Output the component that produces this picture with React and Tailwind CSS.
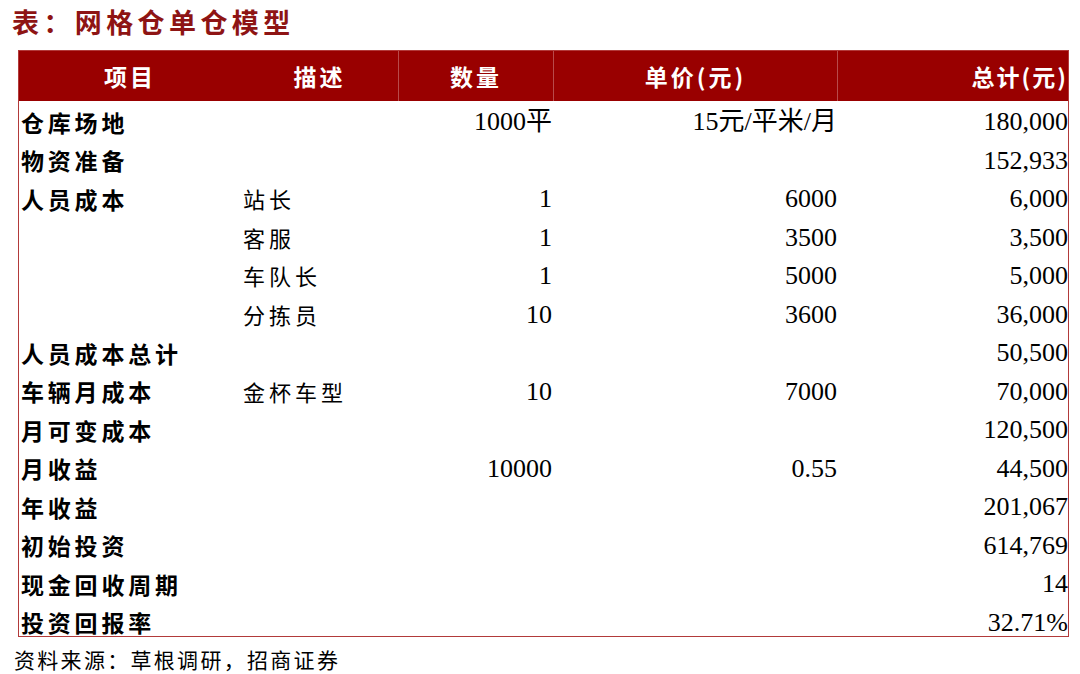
const rows = [
  ["仓库场地", "", "1000平", "15元/平米/月", "180,000"],
  ["物资准备", "", "", "", "152,933"],
  ["人员成本", "站长", "1", "6000", "6,000"],
  ["", "客服", "1", "3500", "3,500"],
  ["", "车队长", "1", "5000", "5,000"],
  ["", "分拣员", "10", "3600", "36,000"],
  ["人员成本总计", "", "", "", "50,500"],
  ["车辆月成本", "金杯车型", "10", "7000", "70,000"],
  ["月可变成本", "", "", "", "120,500"],
  ["月收益", "", "10000", "0.55", "44,500"],
  ["年收益", "", "", "", "201,067"],
  ["初始投资", "", "", "", "614,769"],
  ["现金回收周期", "", "", "", "14"],
  ["投资回报率", "", "", "", "32.71%"],
];

const num = "font-['Liberation_Serif','Noto_Sans_CJK_SC',serif] text-[26px]";
const grid = "grid grid-cols-[222px_158px_155px_284px_231px]";

const App = () => {
  return (
    <div className="w-[1080px] h-[674px] bg-white overflow-hidden">
      <div className="h-[50px] pl-[12px] pt-[3px]">
        <h1 className="font-['Noto_Sans_CJK_SC',sans-serif] text-[27px] font-bold leading-[38px] tracking-[4.4px] text-[#8e1414]">
          表：网格仓单仓模型
        </h1>
      </div>

      <div className="ml-[18px] w-[1051px] border border-[#b23a3a]">
        <div className={`${grid} h-[50px] bg-[#990000] text-white font-['Noto_Sans_CJK_SC',sans-serif] font-bold text-[23px] tracking-[3px]`}>
          <div className="flex items-center justify-center">项目</div>
          <div className="flex items-center justify-center border-r border-[#b84a4a]">描述</div>
          <div className="flex items-center justify-center border-r border-[#b84a4a]">数量</div>
          <div className="flex items-center justify-center border-r border-[#b84a4a]">单价(元)</div>
          <div className="flex items-center justify-end pr-[1px] tracking-[2px]">总计(元)</div>
        </div>

        {rows.map((r, i) => (
          <div
            key={i}
            className={`${grid} ${i === rows.length - 1 ? "h-[34px]" : "h-[38.5px]"} text-black`}
          >
            <div className="flex items-center h-[38.5px] pt-[3px] pl-[2px] font-['Noto_Sans_CJK_SC',sans-serif] font-bold text-[23px] tracking-[3.8px]">
              {r[0]}
            </div>
            <div className="flex items-center h-[38.5px] pt-[3px] pl-[2px] font-['Noto_Sans_CJK_SC',sans-serif] text-[22px] tracking-[4px]">
              {r[1]}
            </div>
            <div className={`flex items-center justify-end h-[38.5px] pt-[3px] pr-[2px] ${num}`}>{r[2]}</div>
            <div className={`flex items-center justify-end h-[38.5px] pt-[3px] pr-[1px] ${num}`}>{r[3]}</div>
            <div className={`flex items-center justify-end h-[38.5px] pt-[3px] pr-[1px] ${num}`}>{r[4]}</div>
          </div>
        ))}
      </div>

      <div className="pl-[14px] pt-[8px] font-['Noto_Sans_CJK_SC',sans-serif] text-[21px] leading-[28px] tracking-[2.3px] text-black">
        资料来源：草根调研，招商证券
      </div>
    </div>
  );
};

export default App;
